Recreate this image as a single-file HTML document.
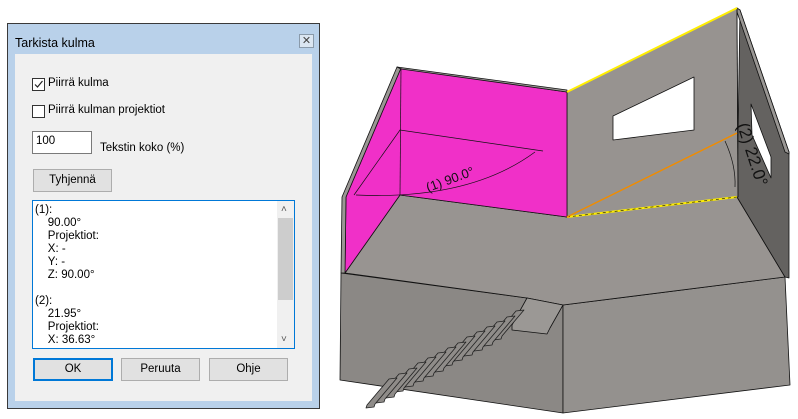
<!DOCTYPE html>
<html><head><meta charset="utf-8"><style>
body{margin:0;width:798px;height:419px;background:#fff;position:relative;overflow:hidden;font-family:"Liberation Sans",sans-serif;font-size:11.5px;color:#000}
.a{position:absolute}
.dlg{left:7px;top:23px;width:311px;height:384px;border:1px solid #3a3a3a;background:#b9d1ea}
.cli{left:7px;top:30px;width:297px;height:347px;background:#f0f0f0}
.cb{width:11px;height:11px;border:1px solid #333;background:#fff}
.btn{height:21px;border:1px solid #adadad;background:#e1e1e1;text-align:center;line-height:21px}
</style></head><body>
<div class="a dlg">
 <div class="a" style="left:7px;top:12px;font-size:12.5px">Tarkista kulma</div>
 <div class="a" style="left:291px;top:10px;width:13px;height:12px;border:1px solid #8a9aaa;background:#dbe6f2;font-size:11px;line-height:12px;text-align:center;color:#444">✕</div>
 <div class="a cli">
  <div class="a cb" style="left:17px;top:24px"><svg width="11" height="11" style="display:block"><path d="M2 5.5 L4.5 8 L9.5 2" stroke="#222" fill="none" stroke-width="1.2"/></svg></div>
  <div class="a" style="left:33px;top:23px">Piirrä kulma</div>
  <div class="a cb" style="left:17px;top:51px"></div>
  <div class="a" style="left:33px;top:50px">Piirrä kulman projektiot</div>
  <div class="a" style="left:17px;top:77px;width:58px;height:21px;border:1px solid #7a7a7a;background:#fff"><span class="a" style="left:3px;top:3px">100</span></div>
  <div class="a" style="left:85px;top:88px">Tekstin koko (%)</div>
  <div class="a btn" style="left:18px;top:115px;width:77px">Tyhjennä</div>
  <div class="a" style="left:17px;top:146px;width:261px;height:147px;border:1px solid #0078d7;background:#fff;line-height:13px">
   <div class="a" style="left:2px;top:3px">(1):<br>&nbsp;&nbsp;&nbsp;&nbsp;90.00°<br>&nbsp;&nbsp;&nbsp;&nbsp;Projektiot:<br>&nbsp;&nbsp;&nbsp;&nbsp;X: -<br>&nbsp;&nbsp;&nbsp;&nbsp;Y: -<br>&nbsp;&nbsp;&nbsp;&nbsp;Z: 90.00°<br><br>(2):<br>&nbsp;&nbsp;&nbsp;&nbsp;21.95°<br>&nbsp;&nbsp;&nbsp;&nbsp;Projektiot:<br>&nbsp;&nbsp;&nbsp;&nbsp;X: 36.63°</div>
   <div class="a" style="left:244px;top:0;width:17px;height:147px;background:#f0f0f0"></div>
   <div class="a" style="left:245px;top:17px;width:15px;height:82px;background:#cdcdcd"></div>
   <div class="a" style="left:248px;top:2px;font-size:10px;color:#555">˄</div>
   <div class="a" style="left:248px;top:132px;font-size:10px;color:#555">˅</div>
  </div>
  <div class="a btn" style="left:18px;top:304px;width:76px;border:2px solid #0078d7;height:19px;line-height:19px">OK</div>
  <div class="a btn" style="left:106px;top:304px;width:77px">Peruuta</div>
  <div class="a btn" style="left:194px;top:304px;width:77px">Ohje</div>
 </div>
</div>
<svg class="a" style="left:0;top:0" width="798" height="419">
 <g stroke="#111" stroke-width="0.8" stroke-linejoin="round">
 <polygon points="341,273 527,298 563,305 563,413 340,380" fill="#8b8885"/>
 <polygon points="563,305 785,277 790,385 563,413" fill="#94918e"/>
 <polygon points="345,273 400,195 567,217 737,197 785,277 563,305 527,298" fill="#989491"/>
 <polygon points="740,10 789,152 789,278 785,277 737,197" fill="#646260"/>
 <polygon points="737,8 740,10 789,152 789,154 785,152 737,12" fill="#9a9794"/>
 <polygon points="751,104 771,157 771,178 752,135" fill="#fff"/>
 <polygon points="567,92 737,8 738,197 567,217" fill="#979390"/>
 <polygon points="613,116 694,77 694,130 613,140" fill="#fff"/>
 <polygon points="346,197 401,68 567,92 567,217 400,195 345,273" fill="#f030c8"/>
 <polygon points="342,197 397,67 401,68 346,197 345,273 341,273" fill="#9a9794"/>
 <polygon points="397,67 567,90 567,92 401,69" fill="#9a9794"/>
 <polygon points="527,298 563,305 550,328 547,334 512,330 512,325" fill="#9b9895"/>
 </g>
 <g stroke="#111" stroke-width="0.7" fill="none">
  <line x1="401" y1="68" x2="400" y2="195"/>
  <polyline points="354,195 400,130 543,151"/>
  <path d="M356,195 Q470,200 535,152"/>
  <line x1="738" y1="197" x2="737" y2="8"/>
 </g>
 <line x1="567" y1="92" x2="737" y2="8" stroke="#ffee00" stroke-width="2"/>
 <line x1="567" y1="217" x2="737" y2="197" stroke="#ffee00" stroke-width="2"/>
 <line x1="567" y1="217" x2="737" y2="197" stroke="#111" stroke-width="0.6" stroke-dasharray="3 3"/>
 <line x1="567" y1="217" x2="737" y2="133" stroke="#f08c00" stroke-width="1.5"/>
 <path d="M725,141 Q736,165 735,187" stroke="#111" fill="none" stroke-width="0.7"/>
 <g fill="#8f8c89" stroke="#222" stroke-width="0.8" stroke-linejoin="round">
  <path d="M494,337 l22,-26 l8,-1 l-22,26 l-1,3 l-8,1z"/>
  <path d="M485,343 l22,-26 l8,-1 l-22,26 l-1,3 l-8,1z"/>
  <path d="M475,348 l22,-26 l8,-1 l-22,26 l-1,3 l-8,1z"/>
  <path d="M465,353 l22,-26 l8,-1 l-22,26 l-1,3 l-8,1z"/>
  <path d="M455,358 l22,-26 l8,-1 l-22,26 l-1,3 l-8,1z"/>
  <path d="M445,363 l22,-26 l8,-1 l-22,26 l-1,3 l-8,1z"/>
  <path d="M436,369 l22,-26 l8,-1 l-22,26 l-1,3 l-8,1z"/>
  <path d="M426,374 l22,-26 l8,-1 l-22,26 l-1,3 l-8,1z"/>
  <path d="M416,379 l22,-26 l8,-1 l-22,26 l-1,3 l-8,1z"/>
  <path d="M406,384 l22,-26 l8,-1 l-22,26 l-1,3 l-8,1z"/>
  <path d="M396,389 l22,-26 l8,-1 l-22,26 l-1,3 l-8,1z"/>
  <path d="M387,395 l22,-26 l8,-1 l-22,26 l-1,3 l-8,1z"/>
  <path d="M377,400 l22,-26 l8,-1 l-22,26 l-1,3 l-8,1z"/>
  <path d="M367,405 l22,-26 l8,-1 l-22,26 l-1,3 l-8,1z"/>
 </g>
 <text transform="translate(428,192) rotate(-20)" font-family="Liberation Sans" font-size="13" fill="#111">(1) 90.0°</text>
 <text transform="translate(737,125) rotate(72)" font-family="Liberation Sans" font-size="17" fill="#111">(2) 22.0°</text>
</svg>
</body></html>
